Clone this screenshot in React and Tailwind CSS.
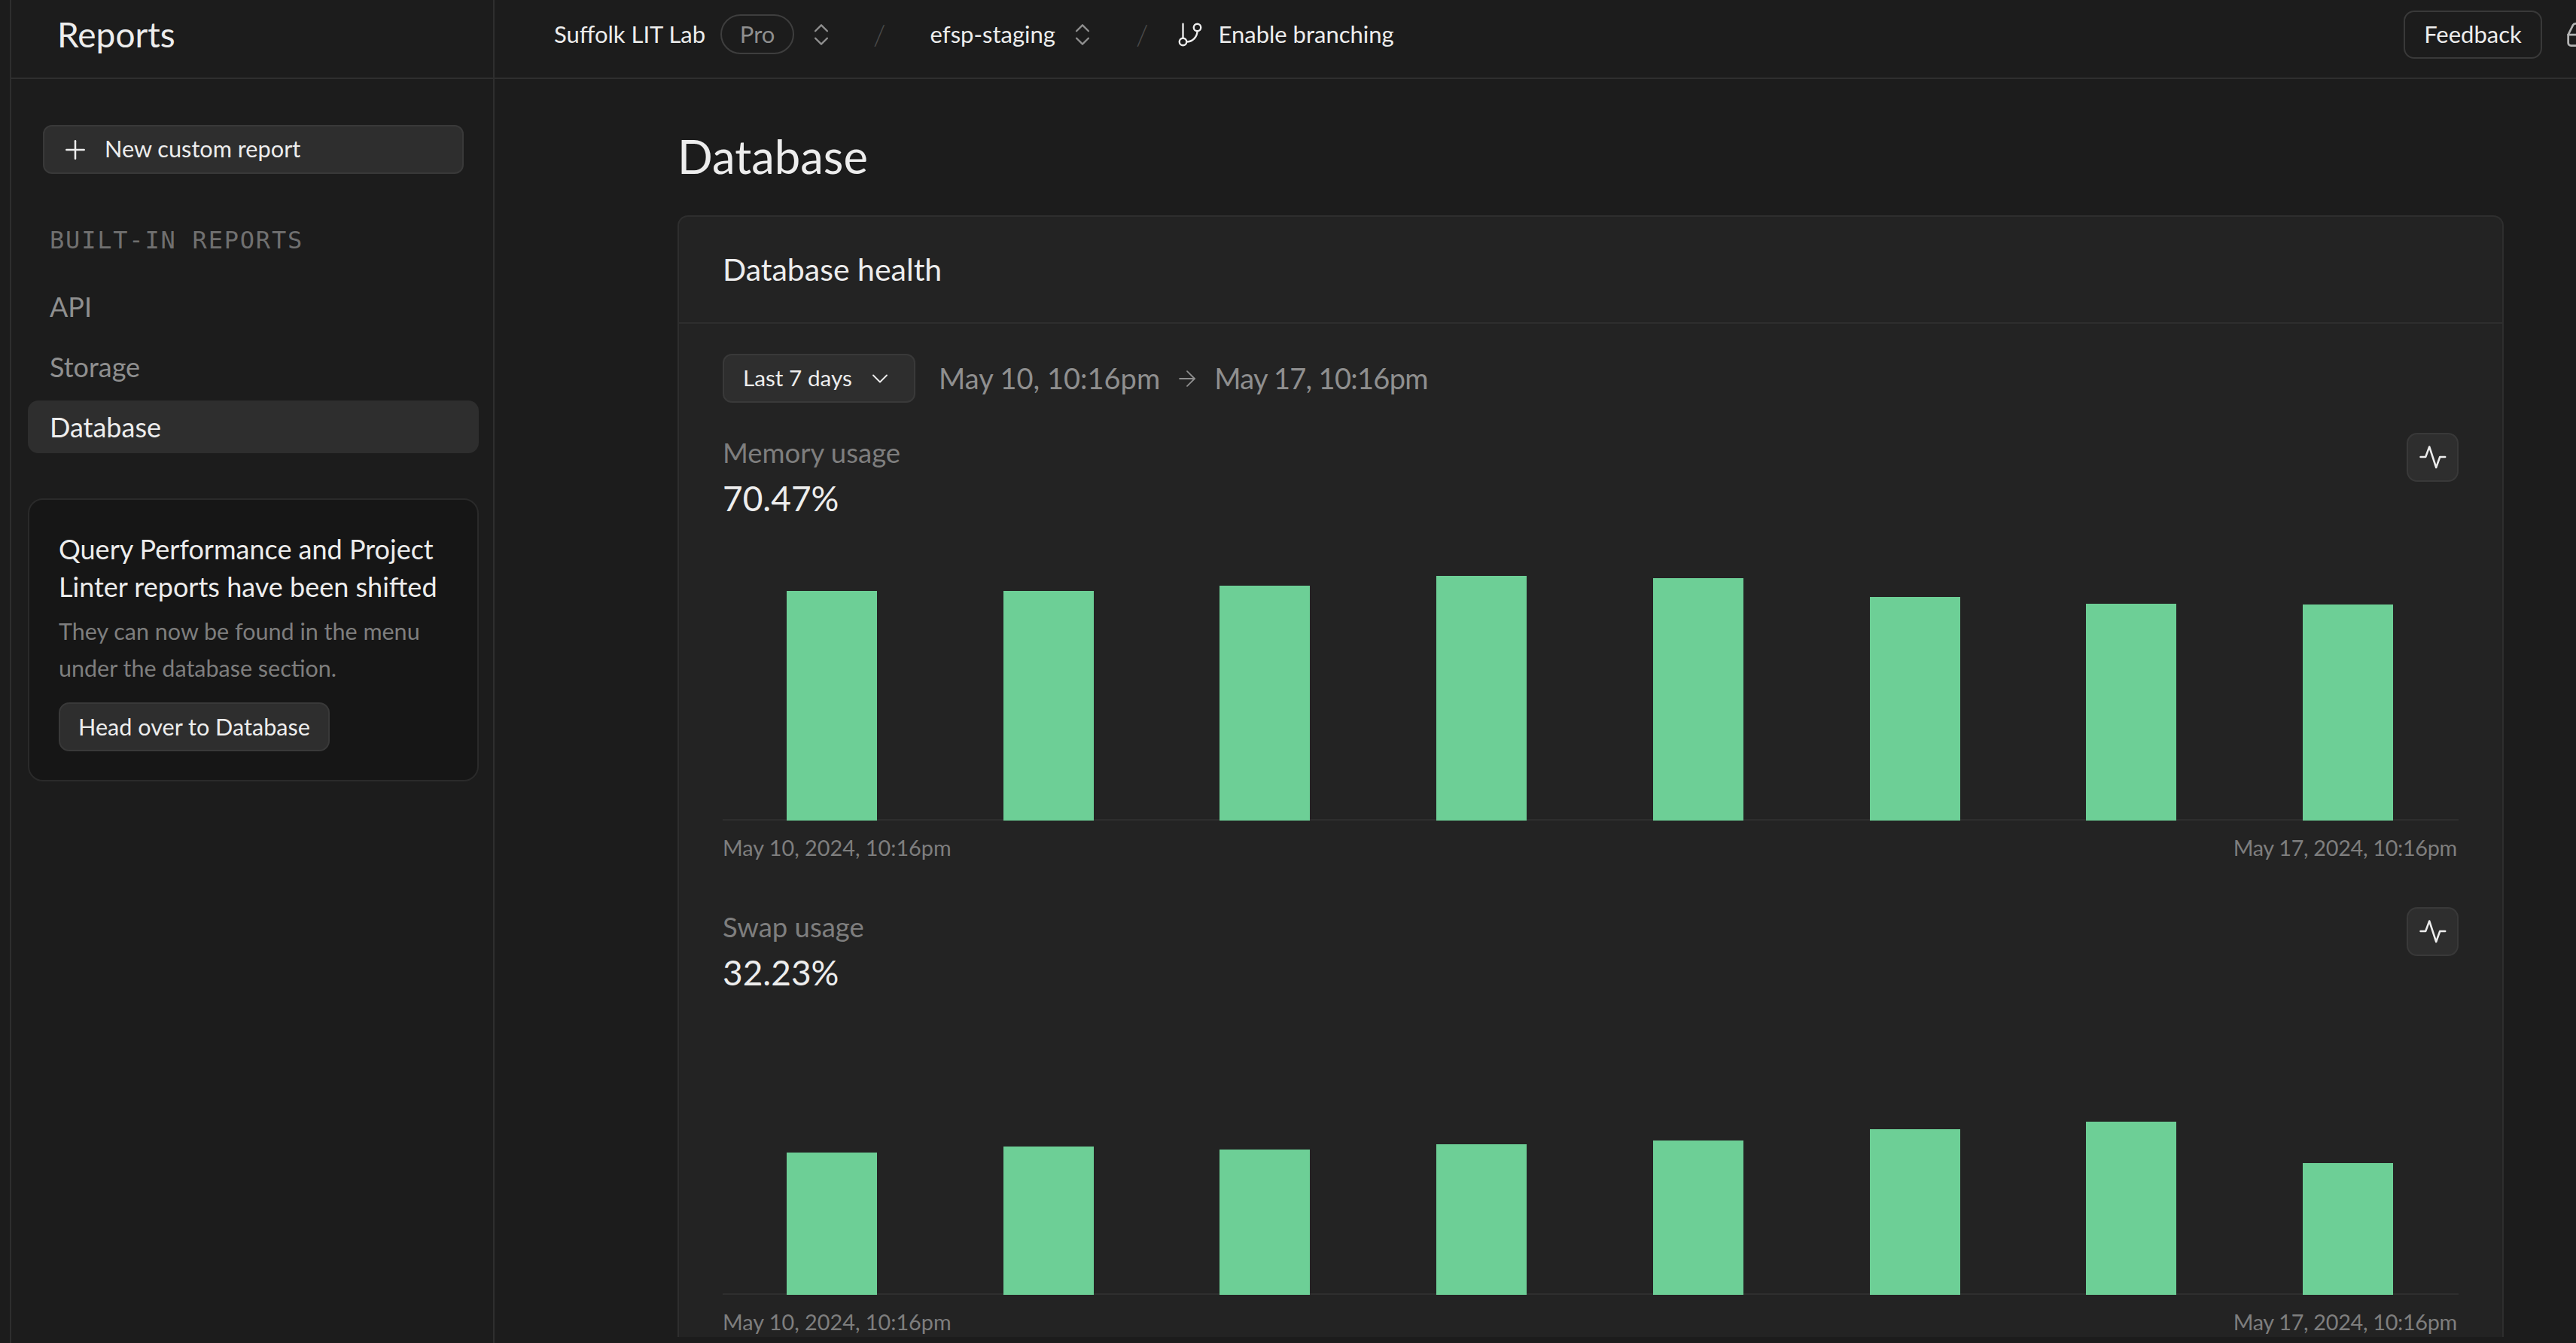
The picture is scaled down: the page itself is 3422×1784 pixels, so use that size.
import React from 'react';
import { Plus, ChevronDown, ChevronsUpDown, ArrowRight, GitBranch, Inbox } from 'lucide-react';

const memoryBars = [305, 305, 312, 325, 322, 297, 288, 287];
const swapBars = [189, 197, 193, 200, 205, 220, 230, 175];

const Pulse = () => (
  <svg width="36" height="31" viewBox="0 0 36 31" fill="none" stroke="currentColor" strokeWidth="2.5" strokeLinecap="round" strokeLinejoin="round">
    <path d="M1.5 15H8.2L13.2 1.5L22.2 29L27.2 15H34.2" />
  </svg>
);

const Chart = ({ label, value, bars }) => (
  <div className="flex flex-col">
    <div className="flex justify-between">
      <div className="flex flex-col">
        <span className="mt-[-1px] h-[45px] text-[36.5px] leading-[44px] text-[#7e7e7e]">{label}</span>
        <span className="mt-[16px] h-[44px] text-[46px] leading-[44px] text-[#ededed]">{value}</span>
      </div>
      <button className="mt-[-5px] flex h-[65px] w-[69px] items-center justify-center rounded-[14px] border-2 border-[#393939] bg-[#2e2e2e] text-[#ededed]">
        <Pulse />
      </button>
    </div>
    <div className="mt-[30px] flex h-[376px] items-end border-b-2 border-[#2e2e2e] pl-[1px] pr-[3px]">
      {bars.map((h, i) => (
        <div key={i} className="mb-[-2px] flex flex-1 justify-center">
          <div className="w-[120px] bg-[#6dcf96]" style={{ height: h }} />
        </div>
      ))}
    </div>
    <div className="mt-[16px] flex justify-between pr-[2px] text-[28.8px] leading-[40px] text-[#7e7e7e]">
      <span>May 10, 2024, 10:16pm</span>
      <span className="tracking-[-0.3px]">May 17, 2024, 10:16pm</span>
    </div>
  </div>
);

const Slash = () => <span className="text-[38px] font-light text-[#4a4a4a]">/</span>;

export default function App() {
  return (
    <div className="flex h-screen w-full overflow-hidden bg-[#1c1c1c] font-['Lato',sans-serif] text-[#ededed]">
      <div className="w-[15px] shrink-0 border-r-2 border-[#2e2e2e]" />
      <aside className="flex w-[642px] shrink-0 flex-col border-r-2 border-[#2e2e2e]">
        <div className="flex h-[105px] shrink-0 items-center border-b-2 border-[#2e2e2e] pb-[12px] pl-[61px] text-[46px]">
          Reports
        </div>
        <div className="flex flex-col pl-[22px] pr-[19px] pt-[61px]">
          <button className="mx-[20px] flex h-[65px] items-center gap-[19px] rounded-[12px] border-2 border-[#393939] bg-[#2e2e2e] pl-[21px] text-[30.7px]">
            <Plus className="h-[40px] w-[40px]" strokeWidth={1.5} />
            New custom report
          </button>
          <div className="mt-[66px] pl-[29px] font-['DejaVu_Sans_Mono',monospace] text-[32px] leading-[44px] tracking-[1.8px] text-[#707070]">
            BUILT-IN REPORTS
          </div>
          <div className="mt-[31px] flex flex-col gap-[10px] text-[36px]">
            <div className="flex h-[70px] items-center rounded-[14px] pl-[29px] text-[#8f8f8f]">API</div>
            <div className="flex h-[70px] items-center rounded-[14px] pl-[29px] text-[#8f8f8f]">Storage</div>
            <div className="flex h-[70px] items-center rounded-[14px] bg-[#2e2e2e] pl-[29px] text-[#ededed]">Database</div>
          </div>
          <div className="mt-[60px] flex h-[376px] flex-col rounded-[20px] border-2 border-[#2a2a2a] bg-[#161616] px-[39px] pt-[40px]">
            <p className="text-[36px] leading-[50px]">
              Query Performance and Project
              <br />
              Linter reports have been shifted
            </p>
            <p className="mt-[10px] text-[30.5px] leading-[49px] text-[#7e7e7e]">
              They can now be found in the menu
              <br />
              under the database section.
            </p>
            <button className="mt-[21px] flex h-[65px] w-[360px] items-center justify-center rounded-[14px] border-2 border-[#393939] bg-[#2e2e2e] text-[30.6px]">
              Head over to Database
            </button>
          </div>
        </div>
      </aside>
      <div className="flex min-w-0 flex-1 flex-col">
        <header className="flex h-[105px] shrink-0 items-center border-b-2 border-[#2e2e2e] pb-[12px] pl-[79px] text-[31px]">
          <span>Suffolk LIT Lab</span>
          <span className="ml-[20px] flex h-[53px] w-[98px] items-center justify-center rounded-full border-2 border-[#3e3e3e] text-[#8f8f8f]">Pro</span>
          <ChevronsUpDown className="ml-[17px] h-[38px] w-[38px] text-[#8f8f8f]" strokeWidth={1.5} />
          <span className="ml-[50px]"><Slash /></span>
          <span className="ml-[59px]">efsp-staging</span>
          <ChevronsUpDown className="ml-[17px] h-[38px] w-[38px] text-[#8f8f8f]" strokeWidth={1.5} />
          <span className="ml-[52px]"><Slash /></span>
          <GitBranch className="ml-[37px] h-[38px] w-[38px] text-[#ededed]" strokeWidth={1.5} />
          <span className="ml-[18px]">Enable branching</span>
          <button className="ml-auto flex h-[64px] w-[184px] shrink-0 items-center justify-center rounded-[14px] border-2 border-[#393939]">Feedback</button>
          <Inbox className="ml-[31px] mr-[-30px] h-[44px] w-[44px] shrink-0 text-[#b4b4b4]" strokeWidth={1.5} />
        </header>
        <main className="flex min-h-0 flex-1 flex-col pl-[243px] pr-[96px]">
          <h1 className="mt-[70px] h-[64px] text-[61.5px] leading-[64px]">Database</h1>
          <section className="mt-[47px] shrink-0 rounded-t-[14px] border-2 border-b-0 border-[#2e2e2e] bg-[#232323]">
            <div className="flex h-[142px] items-center border-b-2 border-[#2e2e2e] pl-[58px] text-[41px]">Database health</div>
            <div className="flex flex-col pl-[58px] pr-[58px] pt-[40px]">
              <div className="flex items-center">
                <button className="flex h-[65px] w-[256px] items-center rounded-[12px] border-2 border-[#393939] bg-[#2e2e2e] pl-[25px] text-[29.7px]">
                  Last 7 days
                  <ChevronDown className="ml-[19px] h-[36px] w-[36px]" strokeWidth={1.25} />
                </button>
                <span className="ml-[31px] text-[38px] text-[#8f8f8f]">May 10, 10:16pm</span>
                <ArrowRight className="mx-[19px] h-[34px] w-[34px] text-[#8f8f8f]" strokeWidth={1.25} />
                <span className="text-[38px] tracking-[-0.7px] text-[#8f8f8f]">May 17, 10:16pm</span>
              </div>
              <div className="mt-[45px] flex flex-col gap-[64px]">
                <Chart label="Memory usage" value="70.47%" bars={memoryBars} />
                <Chart label="Swap usage" value="32.23%" bars={swapBars} />
              </div>
            </div>
          </section>
        </main>
      </div>
    </div>
  );
}
